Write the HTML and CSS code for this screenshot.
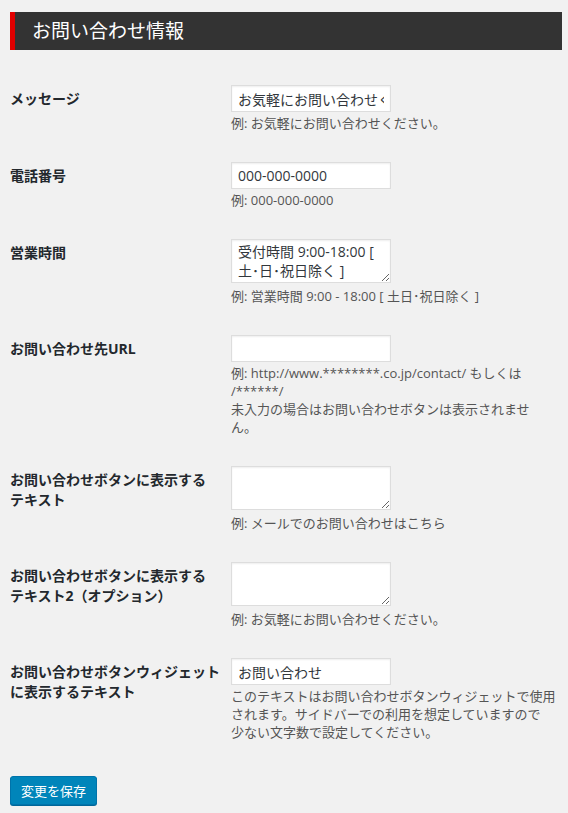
FILE: index.html
```html
<!DOCTYPE html>
<html lang="ja">
  <head>
    <meta charset="UTF-8" />
    <meta name="viewport" content="width=device-width, initial-scale=1.0" />
    <title>お問い合わせ情報</title>
    <link rel="stylesheet" href="styles.css">
  </head>
  <body>
    <div class="wrap">
      <h2 class="section-title">お問い合わせ情報</h2>

      <form id="contactForm">
        <table class="form-table">
          <tr>
            <th><label for="message">メッセージ</label></th>
            <td>
              <input type="text" id="message" class="text" value="お気軽にお問い合わせください。" />
              <p class="description">例: お気軽にお問い合わせください。</p>
            </td>
          </tr>
          <tr>
            <th><label for="tel">電話番号</label></th>
            <td>
              <input type="text" id="tel" class="text" value="000-000-0000" />
              <p class="description">例: 000-000-0000</p>
            </td>
          </tr>
          <tr>
            <th><label for="hours">営業時間</label></th>
            <td>
              <textarea id="hours">受付時間 9:00-18:00 [ 土･日･祝日除く ]</textarea>
              <p class="description">例: 営業時間 9:00 - 18:00 [ 土日･祝日除く ]</p>
            </td>
          </tr>
          <tr>
            <th><label for="url">お問い合わせ先URL</label></th>
            <td>
              <input type="text" id="url" class="text" value="" />
              <p class="description">例: http://www.********.co.jp/contact/ もしくは<br />/******/<br />未入力の場合はお問い合わせボタンは表示されませ<br />ん。</p>
            </td>
          </tr>
          <tr>
            <th><label for="btnText">お問い合わせボタンに表示する<br />テキスト</label></th>
            <td>
              <textarea id="btnText"></textarea>
              <p class="description">例: メールでのお問い合わせはこちら</p>
            </td>
          </tr>
          <tr>
            <th><label for="btnText2">お問い合わせボタンに表示する<br />テキスト2（オプション）</label></th>
            <td>
              <textarea id="btnText2"></textarea>
              <p class="description">例: お気軽にお問い合わせください。</p>
            </td>
          </tr>
          <tr>
            <th><label for="widgetText">お問い合わせボタンウィジェット<br />に表示するテキスト</label></th>
            <td>
              <input type="text" id="widgetText" class="text" value="お問い合わせ" />
              <p class="description">このテキストはお問い合わせボタンウィジェットで使用<br />されます。サイドバーでの利用を想定していますので<br />少ない文字数で設定してください。</p>
            </td>
          </tr>
        </table>

        <p class="submit">
          <button type="submit" class="button-primary">変更を保存</button>
        </p>
      </form>
    </div>
  </body>
</html>
```

FILE: styles.css
```css
body {
  margin: 0;
  background-color: #f1f1f1;
  color: #444;
  font-family: "Open Sans", "Noto Sans CJK JP", sans-serif;
  font-size: 13px;
}

.wrap {
  padding: 12px 6px 10px 10px;
}

.section-title {
  margin: 0;
  padding: 9px 16px 9px 17px;
  background-color: #333;
  border-left: 5px solid #e00000;
  color: #fff;
  font-size: 19px;
  font-weight: normal;
  line-height: 20px;
}

.form-table {
  width: 100%;
  margin-top: 20px;
  border-collapse: collapse;
  table-layout: fixed;
}

.form-table th {
  width: 200px;
  padding: 19px 10px 18px 0;
  vertical-align: top;
  text-align: left;
  color: #23282d;
  font-size: 14px;
  font-weight: bold;
  line-height: 20px;
  white-space: nowrap;
}

.form-table td {
  padding: 15px 10px 15px 11px;
  vertical-align: top;
}

.form-table input.text,
.form-table textarea {
  display: block;
  box-sizing: border-box;
  width: 160px;
  margin: 0;
  padding: 3px 6px;
  background-color: #fff;
  border: 1px solid #ddd;
  box-shadow: inset 0 1px 2px rgba(0, 0, 0, 0.07);
  color: #32373c;
  font-family: "Open Sans", "Noto Sans CJK JP", sans-serif;
  font-size: 14px;
}

.form-table input.text {
  height: 27px;
}

.form-table textarea {
  height: 44px;
  margin-bottom: 4px;
  line-height: 19px;
  padding: 2px 6px;
  resize: both;
}

.form-table .description {
  margin: 2px 0 0;
  color: #555;
  font-size: 13px;
  line-height: 18px;
  white-space: nowrap;
}

.submit {
  margin: 20px 0 0;
}

.button-primary {
  height: 29px;
  padding: 0 10px;
  background-color: #0085ba;
  border: 1px solid #0073aa;
  border-radius: 3px;
  box-shadow: 0 1px 0 #006799;
  color: #fff;
  font-family: "Open Sans", "Noto Sans CJK JP", sans-serif;
  font-size: 13px;
  cursor: pointer;
}
```
